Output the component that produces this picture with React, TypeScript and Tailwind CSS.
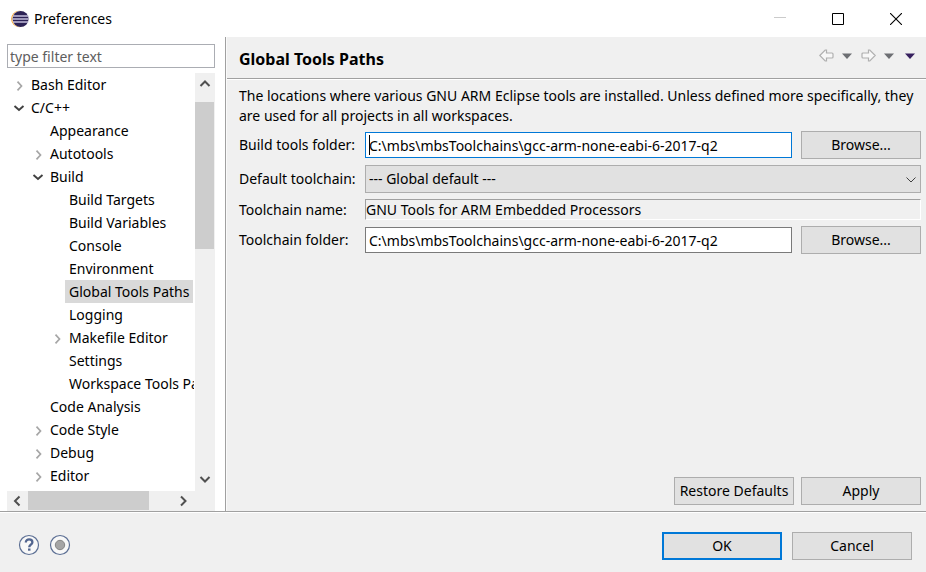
import React from "react";

type Node = { label: string; level: number; state?: "open" | "closed"; selected?: boolean };

const nodes: Node[] = [
  { label: "Bash Editor", level: 0, state: "closed" },
  { label: "C/C++", level: 0, state: "open" },
  { label: "Appearance", level: 1 },
  { label: "Autotools", level: 1, state: "closed" },
  { label: "Build", level: 1, state: "open" },
  { label: "Build Targets", level: 2 },
  { label: "Build Variables", level: 2 },
  { label: "Console", level: 2 },
  { label: "Environment", level: 2 },
  { label: "Global Tools Paths", level: 2, selected: true },
  { label: "Logging", level: 2 },
  { label: "Makefile Editor", level: 2, state: "closed" },
  { label: "Settings", level: 2 },
  { label: "Workspace Tools Paths", level: 2 },
  { label: "Code Analysis", level: 1 },
  { label: "Code Style", level: 1, state: "closed" },
  { label: "Debug", level: 1, state: "closed" },
  { label: "Editor", level: 1, state: "closed" },
];

const indents = ["pl-1", "pl-[23px]", "pl-[42px]"];

function Logo() {
  return (
    <svg width="18" height="18" viewBox="0 0 18 18" aria-hidden="true">
      <circle cx="8.4" cy="9" r="8.2" fill="#f59b1e" />
      <circle cx="9.4" cy="9" r="8.3" fill="#fff" />
      <circle cx="9.6" cy="9" r="8" fill="#2c2255" />
      <path d="M2 6h15.2M1.6 9h16M2 12h15.2" stroke="#c3bfdc" strokeWidth="1.4" />
    </svg>
  );
}

function Chevron({ dir }: { dir: "up" | "down" | "left" | "right" }) {
  const d = {
    up: "M3.5 11 8 6.500l4.500 4.500",
    down: "M3.5 4 8 8.500 12.500 4",
    left: "M10.500 3.500 6 8l4.500 4.500",
    right: "M4 3.500 8.500 8 4 12.500",
  }[dir];
  return (
    <svg width="16" height="16" viewBox="0 0 16 16" aria-hidden="true">
      <path d={d} fill="none" stroke="#505050" strokeWidth="2" />
    </svg>
  );
}

function ScrollButton({ dir }: { dir: "up" | "down" | "left" | "right" }) {
  return (
    <button aria-label={"Scroll " + dir} className="flex size-5 shrink-0 items-center justify-center">
      <Chevron dir={dir} />
    </button>
  );
}

function TreeRow({ node }: { node: Node }) {
  return (
    <li
      role="treeitem"
      aria-level={node.level + 1}
      aria-selected={!!node.selected}
      aria-expanded={node.state ? node.state === "open" : undefined}
      className={"flex h-[23px] " + indents[node.level]}
    >
      <span className="flex w-4 shrink-0 items-center justify-center">
        {node.state && (
          <button aria-label={"Toggle " + node.label}>
            <svg width="12" height="12" viewBox="0 0 12 12" fill="none" className="block" aria-hidden="true">
              {node.state === "open" ? (
                <path d="M1.5 4 6 8l4.5-4" stroke="#404040" strokeWidth="1.9" />
              ) : (
                <path d="m4.500 2.700 4 4.300-4 4.300" stroke="#a6a6a6" strokeWidth="1.7" />
              )}
            </svg>
          </button>
        )}
      </span>
      <span className={"px-1 leading-[23px] whitespace-nowrap " + (node.selected ? "bg-[#d9d9d9]" : "")}>{node.label}</span>
    </li>
  );
}

function PushButton({ children, primary }: { children: React.ReactNode; primary?: boolean }) {
  return (
    <button
      className={
        "h-7 w-[120px] shrink-0 bg-[#e1e1e1] text-center whitespace-nowrap " +
        (primary ? "border-2 border-[#0078d7]" : "border border-[#adadad]")
      }
    >
      {children}
    </button>
  );
}

function HistoryArrow({ label, flip }: { label: string; flip?: boolean }) {
  return (
    <button aria-label={label}>
      <svg width="15" height="13" viewBox="0 0 15 13" fill="none" className="block" aria-hidden="true">
        <path
          d={
            flip
              ? "M14.2 6.5 8.8 1H7.5v3H2Q1 4 1 5v3q0 1 1 1h5.500v3h1.300Z"
              : "M.8 6.500 6.200 1h1.300v3H13q1 0 1 1v3q0 1-1 1H7.500v3H6.200Z"
          }
          fill="#f7f7f7"
          stroke="#b0b0b0"
          strokeWidth="1.2"
        />
      </svg>
    </button>
  );
}

function MenuArrow({ label, dark }: { label: string; dark?: boolean }) {
  return (
    <button aria-label={label}>
      <svg width="10" height="6" viewBox="0 0 10 6" className="block" aria-hidden="true">
        <path d="M0 .5h10L5 6Z" fill={dark ? "#37205f" : "#6d6f73"} />
      </svg>
    </button>
  );
}

export default function App() {
  return (
    <div className="flex h-screen min-h-[400px] flex-col overflow-hidden bg-[#f0f0f0] font-['Noto_Sans','Open_Sans',sans-serif] text-sm text-black">
      <header className="flex h-[37px] shrink-0 items-center bg-white pr-px pl-[11px]">
        <Logo />
        <h1 className="ml-[5px] flex-1">Preferences</h1>
        <button aria-label="Minimize" className="flex h-full w-[58px] items-center justify-center">
          <svg width="12" height="12" viewBox="0 0 12 12"><path d="M0 4.500h12" stroke="#cbcbcb" /></svg>
        </button>
        <button aria-label="Maximize" className="flex h-full w-[58px] items-center justify-center">
          <svg width="12" height="12" viewBox="0 0 12 12"><path d="M.5.5h11v11H.5Z" fill="none" stroke="#000" /></svg>
        </button>
        <button aria-label="Close" className="flex h-full w-[58px] items-center justify-center">
          <svg width="12" height="12" viewBox="0 0 12 12"><path d="m0 0 12 12M12 0 0 12" stroke="#000" strokeWidth="1.1" /></svg>
        </button>
      </header>

      <div className="flex min-h-0 flex-1 border-b border-[#a0a0a0]">
        <aside className="flex w-[226px] shrink-0 flex-col border-r border-[#a0a0a0] bg-white pr-2.5 pl-[7px] pt-[7px]">
          <input
            aria-label="Filter"
            placeholder="type filter text"
            className="h-6 w-full shrink-0 border border-[#abadb3] bg-white px-0.5 outline-none placeholder:text-[#5e5e5e]"
          />
          <div className="mt-[5px] flex min-h-0 flex-1">
            <ul role="tree" aria-label="Preference pages" className="mr-px min-w-0 flex-1 overflow-hidden">
              {nodes.map((n) => (
                <TreeRow key={n.label} node={n} />
              ))}
            </ul>
            <div className="flex w-5 shrink-0 flex-col bg-[#f0f0f0]">
              <ScrollButton dir="up" />
              <div className="flex-1 pt-[9px]">
                <div className="mr-px h-[147px] bg-[#cdcdcd]" />
              </div>
              <ScrollButton dir="down" />
            </div>
          </div>
          <div className="flex h-5 shrink-0 bg-[#f0f0f0] pr-5">
            <ScrollButton dir="left" />
            <div className="flex-1 pl-px">
              <div className="h-[19px] w-[121px] bg-[#cdcdcd]" />
            </div>
            <ScrollButton dir="right" />
          </div>
        </aside>

        <main className="flex min-w-0 flex-1 flex-col border-l border-[#fafafa]">
          <div className="flex h-[42px] shrink-0 items-center border-b border-[#a0a0a0] pr-[11px] pl-3">
            <h2 className="flex-1 pt-0.5 text-base font-bold">Global Tools Paths</h2>
            <div className="flex items-center gap-2 pb-1">
              <HistoryArrow label="Back" />
              <MenuArrow label="Back history" />
              <div className="flex items-center gap-2 pl-px">
                <HistoryArrow label="Forward" flip />
                <MenuArrow label="Forward history" />
              </div>
              <div className="flex pl-[3px]">
                <MenuArrow label="View menu" dark />
              </div>
            </div>
          </div>
          <div className="flex min-h-0 flex-1 flex-col border-t border-white pt-1.5 pb-1.5 pl-3">
            <p className="mb-[5px] leading-5">
              The locations where various GNU ARM Eclipse tools are installed. Unless defined more specifically, they are used for all projects in all workspaces.
            </p>
            <form className="grid grid-cols-[126px_1fr_120px] items-center gap-y-1.5 pr-[5px]">
              <label htmlFor="build">Build tools folder:</label>
              <div className="relative mr-[9px]">
                <input
                  id="build"
                  defaultValue="C:\mbs\mbsToolchains\gcc-arm-none-eabi-6-2017-q2"
                  className="block h-[26px] w-full border border-[#0078d7] bg-white px-[3px] outline-none"
                />
                <span className="absolute top-[3px] left-1 h-5 w-px bg-black" />
              </div>
              <PushButton>Browse...</PushButton>

              <label htmlFor="default">Default toolchain:</label>
              <div className="relative col-span-2">
                <select id="default" className="block h-7 w-full appearance-none border border-[#adadad] bg-[#e1e1e1] px-[3px]">
                  <option>--- Global default ---</option>
                </select>
                <svg width="10" height="6" viewBox="0 0 10 6" className="pointer-events-none absolute top-3 right-[5px]" aria-hidden="true">
                  <path d="m.5.5 4.500 4.500L9.500.5" fill="none" stroke="#404040" />
                </svg>
              </div>

              <label htmlFor="name">Toolchain name:</label>
              <input
                id="name"
                readOnly
                defaultValue="GNU Tools for ARM Embedded Processors"
                className="col-span-2 h-[21px] w-full border border-t-[#a0a0a0] border-r-white border-b-white border-l-[#a0a0a0] bg-transparent outline-none"
              />

              <label htmlFor="folder">Toolchain folder:</label>
              <div className="mr-[9px]">
                <input
                  id="folder"
                  defaultValue="C:\mbs\mbsToolchains\gcc-arm-none-eabi-6-2017-q2"
                  className="block h-[26px] w-full border border-[#7a7a7a] bg-white px-[3px] outline-none"
                />
              </div>
              <PushButton>Browse...</PushButton>
            </form>
            <div className="mt-auto flex justify-end gap-[7px] pr-[5px]">
              <PushButton>Restore Defaults</PushButton>
              <PushButton>Apply</PushButton>
            </div>
          </div>
        </main>
      </div>

      <footer className="flex h-[60px] shrink-0 items-center border-t border-white pt-1.5 pr-3.5 pl-[18px]">
        <div className="flex flex-1 gap-[9px] pb-0.5">
          <button aria-label="Help">
            <svg width="22" height="22" viewBox="0 0 22 22" fill="none" className="block" aria-hidden="true">
              <circle cx="11" cy="11" r="9.500" fill="#f8f8f8" stroke="#5c6f94" strokeWidth="1.200" />
              <path d="M7.800 8.400C7.800 4.300 14.400 4.600 14.400 8.200c0 2.300-3.200 2.600-3.200 5" stroke="#52658f" strokeWidth="2.300" />
              <path d="M10 14.500h2.500v2.200H10Z" fill="#52658f" />
            </svg>
          </button>
          <button aria-label="Record preferences">
            <svg width="22" height="22" viewBox="0 0 22 22" fill="none" className="block" aria-hidden="true">
              <circle cx="11" cy="11" r="9.500" fill="#f8f8f8" stroke="#5c6f94" strokeWidth="1.200" />
              <circle cx="11" cy="11" r="4.700" fill="#a5a5a5" stroke="#858585" />
            </svg>
          </button>
        </div>
        <div className="flex gap-2.5">
          <PushButton primary>OK</PushButton>
          <PushButton>Cancel</PushButton>
        </div>
      </footer>
    </div>
  );
}
